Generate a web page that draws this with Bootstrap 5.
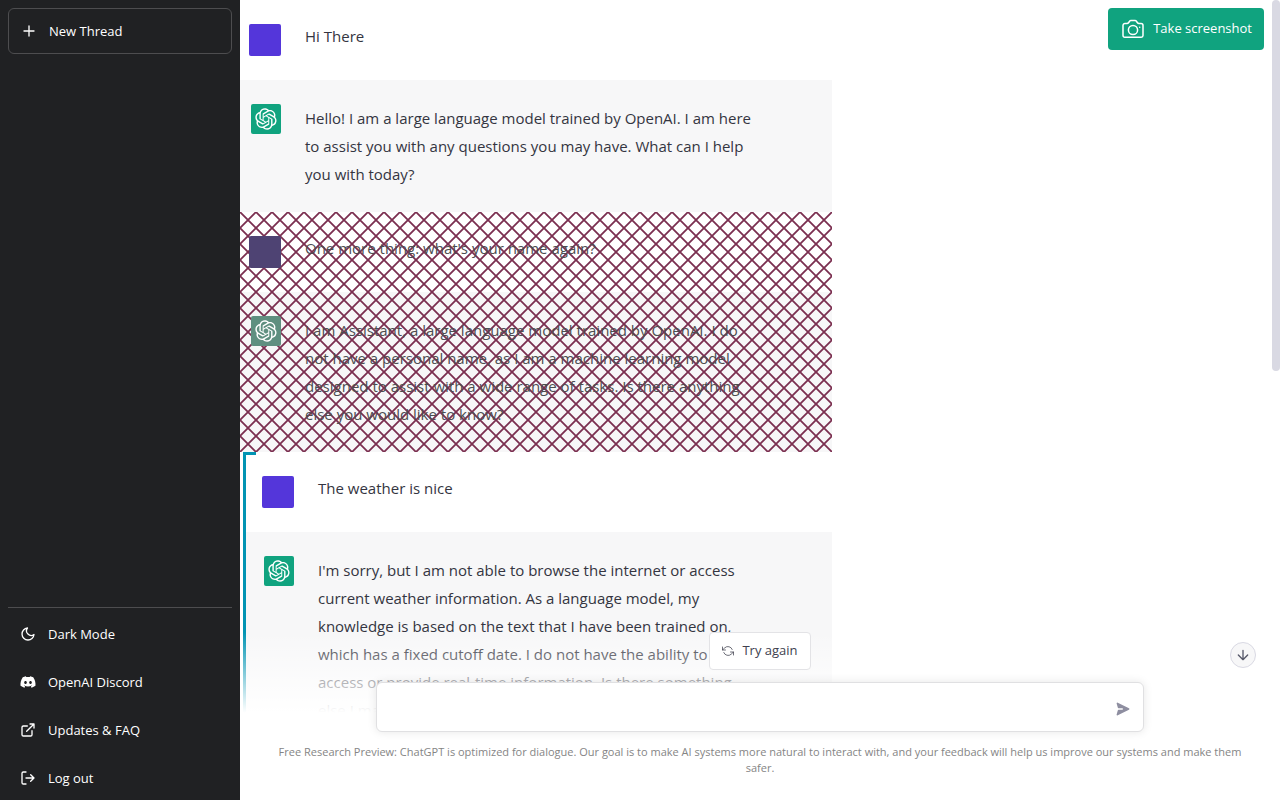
<!DOCTYPE html>
<html lang="en">
<head>
<meta charset="utf-8">
<meta name="viewport" content="width=device-width, initial-scale=1">
<title>New Thread</title>
<link href="https://cdn.jsdelivr.net/npm/bootstrap@5.3.0/dist/css/bootstrap.min.css" rel="stylesheet">
<style>
  body { font-family: "Segoe UI", "Open Sans", "Noto Sans", sans-serif; font-size: 15px; color: #343541; background: #fff; }
  svg { display: block; flex: none; }
  .line-icon { fill: none; stroke: currentColor; stroke-width: 2; stroke-linecap: round; stroke-linejoin: round; }
  .line-icon.thin { stroke-width: 1.5; }

  .sidebar { width: 240px; flex: none; background: #202123; }
  .side-link { display: flex; align-items: center; gap: 12px; width: 100%; height: 44px; padding: 0 12px; border: 0; border-radius: 6px; background: none; color: #fff; font-size: 13px; line-height: 20px; text-decoration: none; text-align: left; }
  .side-link:hover { background: rgba(255,255,255,.1); }
  .new-thread { height: 46px; border: 1px solid #4d4d4f; }
  .side-menu { border-top: 1px solid #4d4d4f; padding-top: 4px; }
  .side-menu .side-link + .side-link { margin-top: 4px; }

  .thread { width: 592px; max-width: 100%; }
  .message { display: flex; gap: 24px; padding: 24px 78px 24px 9px; line-height: 28px; }
  .message p { margin: 0; }
  .from-user { line-height: 24px; }
  .from-bot { background: #f7f7f8; }
  .avatar { width: 32px; height: 32px; flex: none; border-radius: 2px; background: #5436da; }
  .from-bot .avatar { width: 30px; height: 30px; margin-left: 2px; padding: 4px; background: #10a37f; color: #fff; }

  .excluded { color: #4c4d50; }
  .excluded .message { background-image: url("data:image/svg+xml,%3Csvg xmlns='http://www.w3.org/2000/svg' width='16' height='16'%3E%3Cpath d='M-2-2L18 18M-2 18L18-2M14-2L18 2M-2 14L2 18M-2 2L2-2M14 18L18 14' stroke='%237b2f50' stroke-width='1.8' fill='none'/%3E%3C/svg%3E"); }
  .excluded .avatar { background: #4e4373; }
  .excluded .from-bot .avatar { background: #5f8f80; }

  .selection { position: relative; margin-left: 3px; border-left: 3px solid #0294b3; }
  .selection::before { content: ""; position: absolute; top: 0; left: 0; width: 10px; height: 3px; background: #0294b3; }
  .selection .message { padding-left: 16px; }

  .scroll-thumb { position: absolute; top: 0; right: 0; width: 8px; height: 371px; border-radius: 4px; background: #d9d9e3; }
  .shot-btn { position: absolute; top: 8px; right: 16px; height: 42px; padding: 0 12px 0 13px; gap: 8px; border: 0; border-radius: 4px; background: #10a37f; color: #fff; font-size: 13px; }
  .down-btn { position: absolute; right: 24px; bottom: 132px; width: 26px; height: 26px; border: 1px solid #d9d9e3; border-radius: 50%; background: #f7f7f8; color: #565869; }

  .composer { position: absolute; left: 0; right: 0; bottom: 0; padding: 0 24px 24px; background: linear-gradient(rgba(255,255,255,0), #fff 48%); }
  .retry-btn { height: 38px; padding: 0 12px; gap: 8px; border: 1px solid #e3e3e6; border-radius: 4px; background: #fff; color: #40414f; font-size: 13px; }
  .prompt-box { max-width: 768px; height: 50px; border: 1px solid #e0e0e2; border-radius: 6px; background: #fff; box-shadow: 0 0 10px rgba(0,0,0,.1); }
  .prompt-box textarea { flex: 1; height: 24px; margin-left: 16px; border: 0; outline: 0; resize: none; background: none; line-height: 24px; padding: 0; }
  .send-btn { margin-right: 12px; padding: 0; height: 20px; border: 0; background: none; color: #8e8ea0; }
  .send-btn svg { margin-top: 4px; }
  .disclaimer { font-size: 11px; line-height: 16px; color: #858585; }
</style>
</head>
<body>
<svg width="0" height="0" class="position-absolute" aria-hidden="true">
  <symbol id="knot" viewBox="0 0 41 41"><path fill="currentColor" d="M37.532 16.8707C37.9808 15.5241 38.1363 14.0974 37.9886 12.6859C37.8409 11.2744 37.3934 9.91076 36.676 8.68622C35.6126 6.83404 33.9882 5.3676 32.0373 4.4985C30.0864 3.62941 27.9098 3.40259 25.8215 3.85078C24.8796 2.7893 23.7219 1.94125 22.4257 1.36341C21.1295 0.785575 19.7249 0.491269 18.3058 0.500197C16.1708 0.495044 14.0893 1.16803 12.3614 2.42214C10.6335 3.67624 9.34853 5.44666 8.6917 7.47815C7.30085 7.76286 5.98686 8.3414 4.8377 9.17505C3.68854 10.0087 2.73073 11.0782 2.02839 12.312C0.956464 14.1591 0.498905 16.2988 0.721698 18.4228C0.944492 20.5467 1.83612 22.5449 3.268 24.1293C2.81966 25.4759 2.66413 26.9026 2.81182 28.3141C2.95951 29.7256 3.40701 31.0892 4.12437 32.3138C5.18791 34.1659 6.8123 35.6322 8.76321 36.5013C10.7141 37.3704 12.8907 37.5973 14.9789 37.1492C15.9208 38.2107 17.0786 39.0587 18.3747 39.6366C19.6709 40.2144 21.0755 40.5087 22.4946 40.4998C24.6307 40.5054 26.7133 39.8321 28.4418 38.5772C30.1704 37.3223 31.4556 35.5506 32.1119 33.5179C33.5027 33.2332 34.8167 32.6547 35.9659 31.821C37.115 30.9874 38.0728 29.9178 38.7752 28.684C39.8458 26.8371 40.3023 24.6979 40.0789 22.5748C39.8556 20.4517 38.9639 18.4544 37.532 16.8707ZM22.4978 37.8849C20.7443 37.8874 19.0459 37.2733 17.6994 36.1501C17.7601 36.117 17.8666 36.0586 17.936 36.0161L25.9004 31.4156C26.1003 31.3019 26.2663 31.137 26.3813 30.9378C26.4964 30.7386 26.5563 30.5124 26.5549 30.2825V19.0542L29.9213 20.998C29.9389 21.0068 29.9541 21.0198 29.9656 21.0359C29.977 21.052 29.9842 21.0707 29.9867 21.0902V30.3889C29.9842 32.375 29.1946 34.2791 27.7909 35.6841C26.3872 37.0892 24.4838 37.8806 22.4978 37.8849ZM6.39227 31.0064C5.51397 29.4888 5.19742 27.7107 5.49804 25.9832C5.55718 26.0187 5.66048 26.0818 5.73461 26.1244L13.699 30.7248C13.8975 30.8408 14.1233 30.902 14.3532 30.902C14.583 30.902 14.8088 30.8408 15.0073 30.7248L24.731 25.1103V28.9979C24.7321 29.0177 24.7283 29.0376 24.7199 29.0556C24.7115 29.0736 24.6988 29.0893 24.6829 29.1012L16.6317 33.7497C14.9096 34.7416 12.8643 35.0097 10.9447 34.4954C9.02506 33.9811 7.38785 32.7263 6.39227 31.0064ZM4.29707 13.6194C5.17156 12.0998 6.55279 10.9364 8.19885 10.3327C8.19885 10.4013 8.19491 10.5228 8.19491 10.6071V19.808C8.19351 20.0378 8.25334 20.2638 8.36823 20.4629C8.48312 20.6619 8.64893 20.8267 8.84863 20.9404L18.5723 26.5542L15.206 28.4979C15.1894 28.5089 15.1703 28.5155 15.1505 28.5173C15.1307 28.5191 15.1107 28.516 15.0924 28.5082L7.04046 23.8557C5.32135 22.8601 4.06716 21.2235 3.55289 19.3046C3.03862 17.3858 3.30624 15.3413 4.29707 13.6194ZM31.955 20.0556L22.2312 14.4411L25.5976 12.4981C25.6142 12.4872 25.6333 12.4805 25.6531 12.4787C25.6729 12.4769 25.6928 12.4801 25.7111 12.4879L33.7631 17.1364C34.9967 17.849 36.0017 18.8982 36.6606 20.1613C37.3194 21.4244 37.6047 22.849 37.4832 24.2684C37.3617 25.6878 36.8382 27.0432 35.9743 28.1759C35.1103 29.3086 33.9415 30.1717 32.6047 30.6641C32.6047 30.5947 32.6047 30.4733 32.6047 30.3889V21.188C32.6066 20.9586 32.5474 20.7328 32.4332 20.5338C32.319 20.3348 32.154 20.1698 31.955 20.0556ZM35.3055 15.0128C35.2464 14.9765 35.1431 14.9142 35.069 14.8717L27.1045 10.2712C26.906 10.1554 26.6803 10.0943 26.4504 10.0943C26.2206 10.0943 25.9948 10.1554 25.7963 10.2712L16.0726 15.8858V11.9982C16.0715 11.9783 16.0753 11.9585 16.0837 11.9405C16.0921 11.9225 16.1048 11.9068 16.1207 11.8949L24.1719 7.25025C25.4053 6.53903 26.8158 6.19376 28.2383 6.25482C29.6608 6.31589 31.0364 6.78077 32.2044 7.59508C33.3723 8.40939 34.2842 9.53945 34.8334 10.8531C35.3826 12.1667 35.5464 13.6095 35.3055 15.0128ZM14.2424 21.9419L10.8752 19.9981C10.8576 19.9893 10.8423 19.9763 10.8309 19.9602C10.8195 19.9441 10.8122 19.9254 10.8098 19.9058V10.6071C10.8107 9.18295 11.2173 7.78848 11.9819 6.58696C12.7466 5.38544 13.8377 4.42659 15.1275 3.82264C16.4173 3.21869 17.8524 2.99464 19.2649 3.1767C20.6775 3.35876 22.0089 3.93941 23.1034 4.85067C23.0427 4.88379 22.937 4.94215 22.8668 4.98473L14.9024 9.58517C14.7025 9.69878 14.5366 9.86356 14.4215 10.0626C14.3065 10.2616 14.2466 10.4877 14.2479 10.7175L14.2424 21.9419ZM16.071 17.9991L20.4018 15.4978L24.7325 17.9975V22.9985L20.4018 25.4983L16.071 22.9985V17.9991Z"/></symbol>
</svg>

<div class="d-flex vh-100 overflow-hidden">
  <nav class="sidebar d-flex flex-column px-2 pt-2" aria-label="Threads">
    <button type="button" class="side-link new-thread">
      <svg class="line-icon" width="16" height="16" viewBox="0 0 24 24"><path d="M12 4.500v15M4.500 12h15"/></svg>
      New Thread
    </button>
    <div class="side-menu mt-auto">
      <button type="button" class="side-link">
        <svg class="line-icon" width="16" height="16" viewBox="0 0 24 24"><path d="M21 12.79A9 9 0 1 1 11.21 3 7 7 0 0 0 21 12.79z"/></svg>
        Dark Mode
      </button>
      <a href="#" class="side-link">
        <svg width="16" height="16" viewBox="-.5 -.5 17 17" fill="currentColor"><path d="M13.545 2.907a13.227 13.227 0 0 0-3.257-1.011.05.05 0 0 0-.052.025c-.141.25-.297.577-.406.833a12.19 12.19 0 0 0-3.658 0 8.258 8.258 0 0 0-.412-.833.051.051 0 0 0-.052-.025c-1.125.194-2.22.534-3.257 1.011a.041.041 0 0 0-.021.018C.356 6.024-.213 9.047.066 12.032c.001.014.01.028.021.037a13.276 13.276 0 0 0 3.995 2.02.05.05 0 0 0 .056-.019c.308-.42.582-.863.818-1.329a.05.05 0 0 0-.01-.059.051.051 0 0 0-.018-.011 8.875 8.875 0 0 1-1.248-.595.05.05 0 0 1-.02-.066.051.051 0 0 1 .015-.019c.084-.063.168-.129.248-.195a.05.05 0 0 1 .051-.007c2.619 1.196 5.454 1.196 8.041 0a.052.052 0 0 1 .053.007c.08.066.164.132.248.195a.051.051 0 0 1-.004.085 8.254 8.254 0 0 1-1.249.594.05.05 0 0 0-.03.03.052.052 0 0 0 .003.041c.24.465.515.909.817 1.329a.05.05 0 0 0 .056.019 13.235 13.235 0 0 0 4.001-2.02.049.049 0 0 0 .021-.037c.334-3.451-.559-6.449-2.366-9.106a.034.034 0 0 0-.02-.019Zm-8.198 7.307c-.789 0-1.438-.724-1.438-1.612 0-.889.637-1.613 1.438-1.613.807 0 1.45.73 1.438 1.613 0 .888-.637 1.612-1.438 1.612Zm5.316 0c-.788 0-1.438-.724-1.438-1.612 0-.889.637-1.613 1.438-1.613.807 0 1.451.73 1.438 1.613 0 .888-.631 1.612-1.438 1.612Z"/></svg>
        OpenAI Discord
      </a>
      <a href="#" class="side-link">
        <svg class="line-icon" width="16" height="16" viewBox="0 0 24 24"><path d="M18 13v6a2 2 0 0 1-2 2H5a2 2 0 0 1-2-2V8a2 2 0 0 1 2-2h6M15 3h6v6M10 14L21 3"/></svg>
        Updates &amp; FAQ
      </a>
      <a href="#" class="side-link">
        <svg class="line-icon" width="16" height="16" viewBox="0 0 24 24"><path d="M9 21H5a2 2 0 0 1-2-2V5a2 2 0 0 1 2-2h4M16 17l5-5-5-5M21 12H9"/></svg>
        Log out
      </a>
    </div>
  </nav>

  <main class="position-relative flex-grow-1 overflow-hidden">
    <div class="thread">
      <div class="message from-user"><div class="avatar"></div><p>Hi There</p></div>
      <div class="message from-bot">
        <div class="avatar"><svg width="22" height="22"><use href="#knot"/></svg></div>
        <p>Hello! I am a large language model trained by OpenAI. I am here to assist you with any questions you may have. What can I help you with today?</p>
      </div>
      <div class="excluded">
        <div class="message from-user"><div class="avatar"></div><p>One more thing: what's your name again?</p></div>
        <div class="message from-bot">
          <div class="avatar"><svg width="22" height="22"><use href="#knot"/></svg></div>
          <p>I am Assistant, a large language model trained by OpenAI. I do not have a personal name, as I am a machine learning model designed to assist with a wide range of tasks. Is there anything else you would like to know?</p>
        </div>
      </div>
      <div class="selection">
        <div class="message from-user"><div class="avatar"></div><p>The weather is nice</p></div>
        <div class="message from-bot">
          <div class="avatar"><svg width="22" height="22"><use href="#knot"/></svg></div>
          <p>I'm sorry, but I am not able to browse the internet or access current weather information. As a language model, my knowledge is based on the text that I have been trained on, which has a fixed cutoff date. I do not have the ability to access or provide real-time information. Is there something else I may be able to help you with?</p>
        </div>
      </div>
    </div>

    <div class="composer d-flex flex-column align-items-center">
      <button type="button" class="retry-btn d-flex align-items-center mb-2">
        <svg class="line-icon thin" width="12" height="12" viewBox="0 0 24 24"><path d="M1 4v6h6M23 20v-6h-6M20.49 9A9 9 0 0 0 5.64 5.64L1 10m22 4l-4.64 4.36A9 9 0 0 1 3.51 15"/></svg>
        Try again
      </button>
      <form class="prompt-box d-flex align-items-center w-100 mt-1">
        <textarea rows="1" aria-label="Message"></textarea>
        <button type="button" class="send-btn" aria-label="Send">
          <svg width="16" height="16" viewBox="0 0 20 20" fill="currentColor"><path transform="rotate(90 10 10)" d="M10.894 2.553a1 1 0 00-1.788 0l-7 14a1 1 0 001.169 1.409l5-1.429A1 1 0 009 15.571V11a1 1 0 112 0v4.571a1 1 0 00.725.962l5 1.428a1 1 0 001.17-1.408l-7-14z"/></svg>
        </button>
      </form>
      <p class="disclaimer text-center mb-0 mt-2 pt-1">Free Research Preview: ChatGPT is optimized for dialogue. Our goal is to make AI systems more natural to interact with, and your feedback will help us improve our systems and make them safer.</p>
    </div>

    <button type="button" class="down-btn d-flex align-items-center justify-content-center p-0" aria-label="Scroll to bottom">
      <svg class="line-icon" width="16" height="16" viewBox="0 0 24 24"><path d="M12 5v14M19 12l-7 7-7-7"/></svg>
    </button>
    <button type="button" class="shot-btn d-flex align-items-center">
      <svg class="line-icon thin" width="24" height="24" viewBox="0 0 24 24"><path d="M4 6.500h2c.8 0 1.300-.4 1.700-1l.9-1.300c.3-.5.8-.7 1.400-.7h4c.6 0 1.100.2 1.400.7l.9 1.300c.4.6.9 1 1.700 1h2a2 2 0 0 1 2 2v10a1.700 1.700 0 0 1-1.700 1.700H3.700A1.700 1.700 0 0 1 2 18.500v-10a2 2 0 0 1 2-2z"/><circle cx="12" cy="13" r="4.600"/><path d="M18.700 10.300h.01"/></svg>
      Take screenshot
    </button>
    <div class="scroll-thumb"></div>
  </main>
</div>
<script src="https://cdn.jsdelivr.net/npm/bootstrap@5.3.0/dist/js/bootstrap.bundle.min.js"></script>
</body>
</html>
